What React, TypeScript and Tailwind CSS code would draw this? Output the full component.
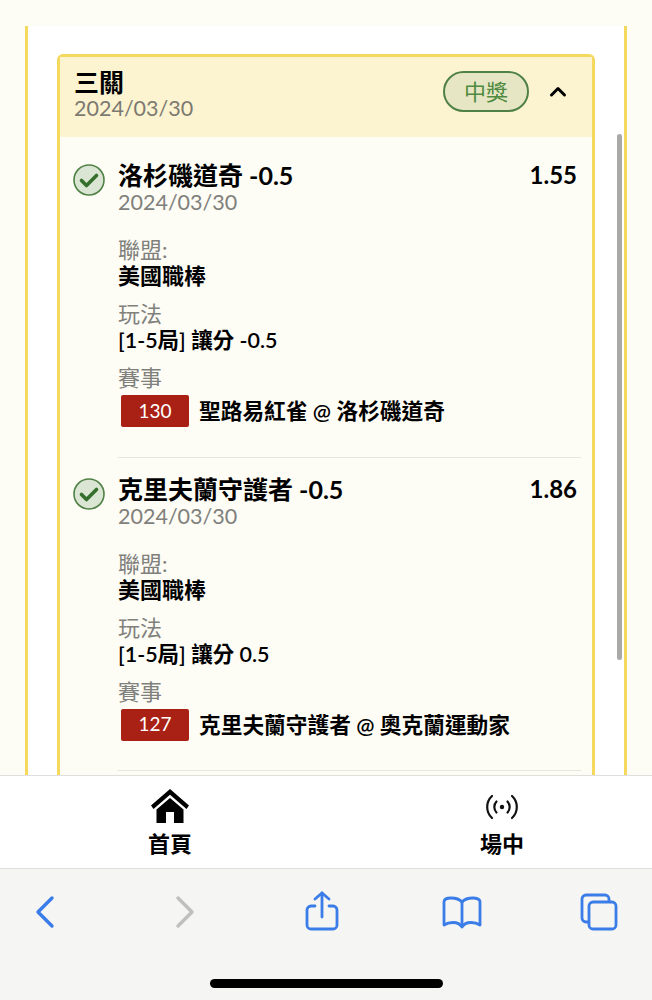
const FONT = 'font-["Lato","Noto_Sans_CJK_TC",sans-serif]';

const LEGS = [
  { title: '洛杉磯道奇 -0.5', odds: '1.55', play: '[1-5局] 讓分 -0.5', code: '130', match: '聖路易紅雀 @ 洛杉磯道奇' },
  { title: '克里夫蘭守護者 -0.5', odds: '1.86', play: '[1-5局] 讓分 0.5', code: '127', match: '克里夫蘭守護者 @ 奧克蘭運動家' },
];

function CheckBadge() {
  return (
    <svg width="32" height="32" viewBox="0 0 32 32" className="shrink-0">
      <circle cx="16" cy="16" r="15" fill="#dbe5d3" stroke="#4f8146" strokeWidth="1.6" />
      <path d="M8.5 16.5l5 5 10-10" fill="none" stroke="#356f2d" strokeWidth="3.6" strokeLinecap="round" strokeLinejoin="round" />
    </svg>
  );
}

function Leg({ title, odds, play, code, match }: (typeof LEGS)[number]) {
  return (
    <article className="h-[313.5px] border-b border-[#e6e6e0] ml-[58px] mr-[11px] relative pt-[16px]">
      <div className="absolute left-[-45px] top-[20px]">
        <CheckBadge />
      </div>
      <div className="flex justify-between pr-[4px] pb-[1px]">
        <h3 className="text-[25px] leading-[30px] font-bold text-black">{title}</h3>
        <span className="text-[24px] leading-[30px] font-bold text-black">{odds}</span>
      </div>
      <p className="text-[21.5px] leading-[22px] text-[#80807c]">2024/03/30</p>
      <p className="mt-[24px] text-[22px] leading-[26px] text-[#80807c]">聯盟:</p>
      <p className="text-[22px] leading-[26px] font-bold text-black">美國職棒</p>
      <p className="mt-[12px] text-[22px] leading-[26px] text-[#80807c]">玩法</p>
      <p className="text-[21.5px] leading-[26px] font-semibold text-black">{play}</p>
      <p className="mt-[12px] text-[22px] leading-[26px] text-[#80807c]">賽事</p>
      <div className="flex items-center gap-[10px] mt-[4px] ml-[3px]">
        <span className="w-[68px] h-[32px] rounded-[2px] bg-[#a92014] text-white text-[19px] flex items-center justify-center">
          {code}
        </span>
        <span className="text-[21.7px] leading-[32px] font-semibold text-black">{match}</span>
      </div>
    </article>
  );
}

export default function App() {
  return (
    <div className={`${FONT} w-[652px] h-[1000px] flex flex-col overflow-hidden bg-[#fdfcf5]`}>
      <main className="relative flex-1 min-h-0 overflow-hidden pt-[26px]">
        <div className="mx-[25px] h-full border-x-[3px] border-[#f5d85e] bg-white px-[29px] pt-[28px]">
          <section className="border-[3px] border-b-0 border-[#f5d85e] rounded-t-[6px] bg-[#fdfcf5] h-[800px]">
            <header className="h-[80px] bg-[#fcf3d0] flex items-start justify-between pl-[14px] pr-[25px]">
              <div className="pt-[10px]">
                <h2 className="text-[25px] leading-[30px] font-bold text-black">三關</h2>
                <p className="text-[21.5px] leading-[22px] text-[#7c7a70]">2024/03/30</p>
              </div>
              <div className="flex items-center gap-[20px] pt-[14px]">
                <span className="w-[86px] h-[41px] rounded-full border-2 border-[#4f8146] bg-[#e6e6c4] text-[#4f8a3f] text-[22px] flex items-center justify-center">
                  中獎
                </span>
                <svg width="18" height="13" viewBox="0 0 18 13">
                  <path d="M2.500 10l6.500-6.500 6.500 6.500" fill="none" stroke="#000" strokeWidth="3" strokeLinecap="round" strokeLinejoin="round" />
                </svg>
              </div>
            </header>
            <div className="pt-[7px]">
              {LEGS.map((leg) => (
                <Leg key={leg.code} {...leg} />
              ))}
            </div>
          </section>
        </div>
        <div className="absolute left-[617px] top-[134px] w-[5px] h-[526px] rounded-full bg-[#a9a9a7]" />
      </main>

      <nav className="h-[94px] shrink-0 bg-white border-y border-[#dededc] flex justify-between pl-[120px] pr-[100px]">
        <a className="w-[100px] flex flex-col items-center pt-[13px]">
          <svg width="38" height="34" viewBox="0 0 38 34">
            <path d="M19 0L0 16.500 2.500 20 19 5.800 35.500 20 38 16.500z" fill="#000" />
            <path d="M19 9L5.500 20.500V34H15V23h8v11h9.500V20.500z" fill="#000" />
          </svg>
          <span className="text-[22px] leading-[30px] mt-[6px] font-semibold text-black">首頁</span>
        </a>
        <a className="w-[100px] flex flex-col items-center pt-[17px]">
          <svg width="32" height="28" viewBox="0 0 32 28" fill="none" stroke="#111" strokeWidth="2.2" strokeLinecap="round">
            <circle cx="16" cy="14" r="2.2" fill="#111" stroke="none" />
            <path d="M10.500 8.500a8 8 0 0 0 0 11" />
            <path d="M21.500 8.500a8 8 0 0 1 0 11" />
            <path d="M6 3a15 15 0 0 0 0 22" />
            <path d="M26 3a15 15 0 0 1 0 22" />
          </svg>
          <span className="text-[22px] leading-[30px] mt-[8px] font-semibold text-black">場中</span>
        </a>
      </nav>

      <footer className="h-[131px] shrink-0 bg-[#f5f5f3] relative">
        <div className="flex items-start pl-[35px] pt-[24px]">
          <svg width="20" height="34" viewBox="0 0 20 34" fill="none" stroke="#3a7ce8" strokeWidth="3.4" strokeLinecap="round" strokeLinejoin="round" className="mt-[2px]">
            <path d="M17 3L3 17l14 14" />
          </svg>
          <svg width="20" height="34" viewBox="0 0 20 34" fill="none" stroke="#bfbfbd" strokeWidth="3.4" strokeLinecap="round" strokeLinejoin="round" className="ml-[120px] mt-[2px]">
            <path d="M3 3l14 14L3 31" />
          </svg>
          <svg width="34" height="40" viewBox="0 0 34 40" fill="none" stroke="#3a7ce8" strokeWidth="2.8" strokeLinecap="round" strokeLinejoin="round" className="ml-[110px] mt-[-2px]">
            <path d="M10 15H6a4 4 0 0 0-4 4v15a4 4 0 0 0 4 4h22a4 4 0 0 0 4-4V19a4 4 0 0 0-4-4h-4" />
            <path d="M17 26V2" />
            <path d="M10 8l7-6 7 6" />
          </svg>
          <svg width="40" height="34" viewBox="0 0 40 34" fill="none" stroke="#3a7ce8" strokeWidth="2.8" strokeLinecap="round" strokeLinejoin="round" className="ml-[103px] mt-[3px]">
            <path d="M20 6C17 2.500 13 2 9 2 6 2 2 3 2 6v23c3-2 6-2.500 9-2.500 4 0 7 1 9 4.500 2-3.500 5-4.500 9-4.500 3 0 6 .5 9 2.500V6c0-3-4-4-7-4-4 0-8 .5-11 4z" />
            <path d="M20 6v24" />
          </svg>
          <svg width="38" height="38" viewBox="0 0 38 38" fill="none" stroke="#3a7ce8" strokeWidth="2.8" strokeLinejoin="round" className="ml-[98px]">
            <rect x="9" y="9" width="27" height="27" rx="4" />
            <path d="M9 29H6a4 4 0 0 1-4-4V6a4 4 0 0 1 4-4h19a4 4 0 0 1 4 4v3" />
          </svg>
        </div>
        <div className="absolute left-[210px] top-[110px] w-[233px] h-[9px] rounded-full bg-black" />
      </footer>
    </div>
  );
}
